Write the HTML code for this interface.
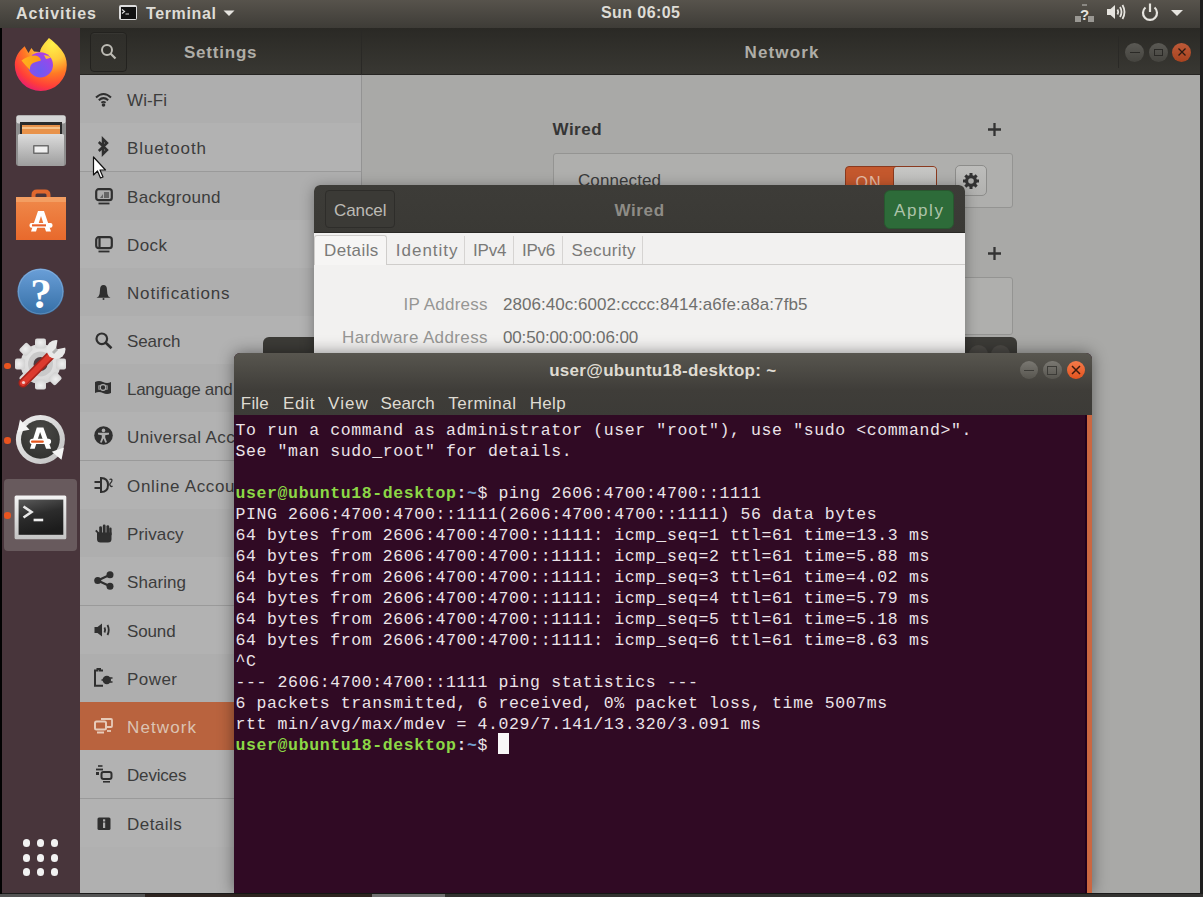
<!DOCTYPE html><html><head><meta charset="utf-8"><style>
*{margin:0;padding:0;box-sizing:border-box}
html,body{width:1203px;height:897px;overflow:hidden;background:#1b1b1b;font-family:"Liberation Sans",sans-serif}
.a{position:absolute}
.t{white-space:pre}
svg{position:absolute;overflow:visible}
</style></head><body>
<div class="a" style="left:0;top:0;width:1203px;height:28px;background:linear-gradient(#57534c,#3e3c37)"></div>
<div class="a t" style="left:16.00px;top:4.70px;font-size:16px;line-height:17px;font-weight:bold;color:#dedcd6;letter-spacing:0.977px;">Activities</div>
<div class="a" style="left:119px;top:5px;width:18px;height:15px;background:#ddd;border-radius:2px"></div>
<div class="a" style="left:120.5px;top:6.5px;width:15px;height:12px;background:#111"></div>
<svg style="left:121px;top:8px" width="10" height="8"><path d="M1 1.5 L3.5 3.5 L1 5.5" stroke="#ddd" stroke-width="1.2" fill="none"/><path d="M4.5 6 H8" stroke="#ddd" stroke-width="1"/></svg>
<div class="a t" style="left:146.00px;top:4.70px;font-size:16px;line-height:17px;font-weight:bold;color:#dedcd6;letter-spacing:0.634px;">Terminal</div>
<svg style="left:223px;top:10px" width="12" height="6"><path d="M0.5 0.5 H11.5 L6 6 Z" fill="#e6e4df"/></svg>
<div class="a t" style="left:601.00px;top:4.10px;font-size:16px;line-height:17px;font-weight:bold;color:#dedcd6;letter-spacing:0.420px;">Sun 06:05</div>
<svg style="left:1074px;top:3px" width="22" height="20">
<rect x="1" y="13" width="6" height="6" fill="#9a9893"/><rect x="14" y="13" width="6" height="6" fill="#9a9893"/>
<rect x="8" y="1" width="5" height="2" fill="#8a8883"/>
<text x="10.5" y="17" font-family="Liberation Sans" font-weight="bold" font-size="15" fill="#e6e4df" text-anchor="middle">?</text></svg>
<svg style="left:1106px;top:3px" width="20" height="18">
<path d="M1 6 H4.5 L9 2 V16 L4.5 12 H1 Z" fill="#e6e4df"/>
<path d="M11.5 6.5 Q13 9 11.5 11.5" stroke="#e6e4df" stroke-width="1.8" fill="none"/>
<path d="M14 4 Q17 9 14 14" stroke="#e6e4df" stroke-width="1.8" fill="none"/>
<path d="M16.5 2 Q20.5 9 16.5 16" stroke="#e6e4df" stroke-width="1.8" fill="none"/></svg>
<svg style="left:1140px;top:2px" width="20" height="20">
<path d="M5.5 5.5 A7 7 0 1 0 14.5 5.5" stroke="#e6e4df" stroke-width="2.2" fill="none"/>
<path d="M10 1.5 V10" stroke="#e6e4df" stroke-width="2.2"/></svg>
<svg style="left:1171px;top:10px" width="12" height="6"><path d="M0 0 H12 L6 6 Z" fill="#e6e4df"/></svg>
<div class="a" style="left:0;top:28px;width:80px;height:865px;background:#48353b"></div>
<div class="a" style="left:0;top:28px;width:2px;height:869px;background:#020202"></div>
<svg style="left:10px;top:32px" width="60" height="64" viewBox="0 0 60 64">
<defs>
<radialGradient id="ffg" cx="0.72" cy="0.12" r="1.0">
<stop offset="0" stop-color="#fff14a"/><stop offset="0.3" stop-color="#ffc93a"/><stop offset="0.55" stop-color="#ff7a24"/><stop offset="0.8" stop-color="#ff3d3a"/><stop offset="1" stop-color="#e0157f"/></radialGradient>
<radialGradient id="ffp" cx="0.45" cy="0.75" r="0.8"><stop offset="0" stop-color="#6a5cf2"/><stop offset="0.6" stop-color="#8e4cec"/><stop offset="1" stop-color="#b73be0"/></radialGradient>
<linearGradient id="ffh" x1="0" y1="0" x2="1" y2="0"><stop offset="0" stop-color="#ffb21e"/><stop offset="1" stop-color="#ff9a16"/></linearGradient>
</defs>
<path d="M14.6 14.3 C8 20 4.8 26 4.8 33 A26 26 0 0 0 56.8 33 C56.8 22 50 16 46 12 C43 9 40.5 7 38.9 6 C36 10 31 14 30 20 L24 19.5 L21.4 16 L18.5 21 Z" fill="url(#ffg)"/>
<circle cx="30.4" cy="32.8" r="12.6" fill="url(#ffp)"/>
<path d="M11.5 28.5 Q17 24 25 23.5 Q30 24 31 28.5 Q26 29.5 23 31 Q19.5 33 20 38 Q15 33 11.5 28.5 Z" fill="url(#ffh)"/>
<path d="M34 23 Q38 23 41 25.5 Q38 26.5 36 27 Z" fill="#ffb83a"/>
</svg>
<svg style="left:15px;top:113px" width="52" height="56" viewBox="0 0 52 56">
<defs><linearGradient id="fcab" x1="0" y1="0" x2="0" y2="1"><stop offset="0" stop-color="#dcdcdc"/><stop offset="1" stop-color="#9d9d9d"/></linearGradient></defs>
<rect x="1" y="2" width="50" height="51" rx="3" fill="#8e8e8e"/>
<rect x="1.5" y="2.5" width="49" height="8" rx="2" fill="#d6d6d6"/>
<rect x="5" y="9" width="42" height="14" fill="#2b2b2b"/>
<rect x="7" y="12" width="38" height="9" fill="#e8924a"/>
<rect x="7" y="14" width="38" height="2" fill="#f6c28a"/>
<rect x="3" y="21" width="46" height="32" rx="1.5" fill="url(#fcab)"/>
<rect x="18" y="32" width="16" height="9" rx="1" fill="#6d6d6d"/>
<rect x="19.5" y="33.5" width="13" height="6" fill="#f0f0f0"/>
</svg>
<svg style="left:15px;top:188px" width="52" height="55" viewBox="0 0 52 55">
<defs><linearGradient id="swg" x1="0" y1="0" x2="0" y2="1"><stop offset="0" stop-color="#f08a4b"/><stop offset="1" stop-color="#e8692c"/></linearGradient></defs>
<path d="M18.5 15 V7 Q18.5 3.5 22 3.5 H30 Q33.5 3.5 33.5 7 V15" stroke="#e0682e" stroke-width="4" fill="none"/>
<rect x="1" y="9" width="50" height="43" fill="url(#swg)"/>
<rect x="1" y="9" width="50" height="5" fill="#f39e62"/>
<path d="M16 43.6 L23 23 H29 L36 43.6 H31 L26 28 L21 43.6 Z" fill="#fff"/>
<rect x="14.5" y="35" width="23" height="4.7" rx="2" fill="#fff"/>
<rect x="17" y="36.3" width="14" height="2.1" fill="#e8602a"/>
</svg>
<svg style="left:16px;top:267px" width="50" height="50" viewBox="0 0 50 50">
<defs><linearGradient id="hg" x1="0" y1="0" x2="0" y2="1"><stop offset="0" stop-color="#6a9fd8"/><stop offset="1" stop-color="#356fa6"/></linearGradient></defs>
<circle cx="24.6" cy="24.6" r="23.2" fill="url(#hg)"/>
<circle cx="24.6" cy="24.6" r="22.2" fill="none" stroke="rgba(255,255,255,0.18)" stroke-width="1"/>
<text x="25" y="41" font-family="Liberation Serif" font-weight="bold" font-size="43" fill="#fff" text-anchor="middle">?</text>
</svg>
<svg style="left:14px;top:337px" width="54" height="55" viewBox="0 0 54 55">
<defs><radialGradient id="gg" cx="0.5" cy="0.4" r="0.6"><stop offset="0" stop-color="#f0f0f0"/><stop offset="1" stop-color="#d4d4d4"/></radialGradient></defs>
<g fill="url(#gg)">
<circle cx="26.5" cy="27" r="20"/>
<rect x="21" y="1.5" width="11" height="10" rx="2" transform="rotate(0 26.5 27)"/><rect x="21" y="1.5" width="11" height="10" rx="2" transform="rotate(45 26.5 27)"/><rect x="21" y="1.5" width="11" height="10" rx="2" transform="rotate(90 26.5 27)"/><rect x="21" y="1.5" width="11" height="10" rx="2" transform="rotate(135 26.5 27)"/><rect x="21" y="1.5" width="11" height="10" rx="2" transform="rotate(180 26.5 27)"/><rect x="21" y="1.5" width="11" height="10" rx="2" transform="rotate(225 26.5 27)"/><rect x="21" y="1.5" width="11" height="10" rx="2" transform="rotate(270 26.5 27)"/><rect x="21" y="1.5" width="11" height="10" rx="2" transform="rotate(315 26.5 27)"/>
</g>
<circle cx="26.5" cy="27" r="12.5" fill="#c9c9c9"/>
<circle cx="26.5" cy="27" r="7" fill="#4d3d41"/>
<path d="M9 46 L40 15" stroke="#a8231b" stroke-width="9" stroke-linecap="round"/>
<path d="M9 46 L40 15" stroke="#dc3a2e" stroke-width="6" stroke-linecap="round"/>
<circle cx="9.5" cy="45.5" r="1.6" fill="#f4d0cc"/>
<circle cx="42" cy="12.5" r="9.5" fill="#e8e8e8"/>
<path d="M42 12.5 L44 0 L54 10 Z" fill="#48353b"/>
<path d="M39 16 L43 12" stroke="#b0b0b0" stroke-width="3"/>
</svg>
<div class="a" style="left:4.2px;top:362.5px;width:6.6px;height:6.6px;border-radius:50%;background:#e9541f"></div>
<svg style="left:15px;top:414px" width="51" height="51" viewBox="0 0 51 51">
<defs><linearGradient id="ug" x1="0" y1="0" x2="1" y2="1"><stop offset="0" stop-color="#f2f2f2"/><stop offset="1" stop-color="#bdbdbd"/></linearGradient>
<radialGradient id="ud" cx="0.5" cy="0.3" r="0.7"><stop offset="0" stop-color="#4a4a47"/><stop offset="1" stop-color="#333331"/></radialGradient></defs>
<circle cx="25.4" cy="25.4" r="24.5" fill="url(#ug)"/>
<circle cx="25.4" cy="25.4" r="19.4" fill="url(#ud)"/>
<path d="M5 5.4 L2.4 18 L14.5 15.8 Z" fill="#f4f4f4"/>
<path d="M49 33.5 L36.8 37.8 L46.5 45.8 Z" fill="#f4f4f4"/>
<path d="M15 34.8 L21.8 13.4 H28.4 L36.1 34.8 H31.1 L25.1 18 L19.7 34.8 Z" fill="#fff"/>
<rect x="14.7" y="24.8" width="21.4" height="5.3" rx="2.6" fill="#fff"/>
<rect x="16" y="26.4" width="12.8" height="2.4" rx="1" fill="#e5561c"/>
</svg>
<div class="a" style="left:4.2px;top:437px;width:6.6px;height:6.6px;border-radius:50%;background:#e9541f"></div>
<div class="a" style="left:4px;top:479px;width:73px;height:72px;border-radius:4px;background:#685a5d"></div>
<svg style="left:13px;top:494px" width="55" height="47" viewBox="0 0 55 47">
<defs><linearGradient id="tsg" x1="0" y1="0" x2="0.3" y2="1"><stop offset="0" stop-color="#5a5a5a"/><stop offset="0.5" stop-color="#2c2c2c"/><stop offset="1" stop-color="#1c1c1c"/></linearGradient>
<linearGradient id="tfg" x1="0" y1="0" x2="0" y2="1"><stop offset="0" stop-color="#f4f4f4"/><stop offset="1" stop-color="#c4c4c4"/></linearGradient></defs>
<rect x="1.6" y="1.6" width="51.7" height="43.7" rx="1.5" fill="url(#tfg)"/>
<rect x="5.6" y="5.6" width="44.7" height="35.2" fill="url(#tsg)"/>
<path d="M10.5 12.5 L18.5 18 L10.5 23.5" stroke="#e8e8e8" stroke-width="2.6" fill="none"/>
<rect x="20.6" y="24.7" width="9.6" height="2.6" fill="#eee"/>
</svg>
<div class="a" style="left:4.2px;top:512px;width:6.6px;height:6.6px;border-radius:50%;background:#e9541f"></div>
<div class="a" style="left:22.9px;top:839.4px;width:7.2px;height:7.2px;border-radius:50%;background:#f2f2f2"></div>
<div class="a" style="left:37.0px;top:839.4px;width:7.2px;height:7.2px;border-radius:50%;background:#f2f2f2"></div>
<div class="a" style="left:51.2px;top:839.4px;width:7.2px;height:7.2px;border-radius:50%;background:#f2f2f2"></div>
<div class="a" style="left:22.9px;top:854.4px;width:7.2px;height:7.2px;border-radius:50%;background:#f2f2f2"></div>
<div class="a" style="left:37.0px;top:854.4px;width:7.2px;height:7.2px;border-radius:50%;background:#f2f2f2"></div>
<div class="a" style="left:51.2px;top:854.4px;width:7.2px;height:7.2px;border-radius:50%;background:#f2f2f2"></div>
<div class="a" style="left:22.9px;top:868.4px;width:7.2px;height:7.2px;border-radius:50%;background:#f2f2f2"></div>
<div class="a" style="left:37.0px;top:868.4px;width:7.2px;height:7.2px;border-radius:50%;background:#f2f2f2"></div>
<div class="a" style="left:51.2px;top:868.4px;width:7.2px;height:7.2px;border-radius:50%;background:#f2f2f2"></div>
<div class="a" style="left:80px;top:28px;width:1120px;height:47px;background:linear-gradient(#2a2925,#393833)"></div>
<div class="a" style="left:80px;top:74px;width:1120px;height:1px;background:#262522"></div>
<div class="a" style="left:361px;top:28px;width:1px;height:47px;background:#2a2926"></div>
<div class="a" style="left:90px;top:32px;width:37px;height:40px;border-radius:4px;border:1px solid #23221f;background:linear-gradient(#2f2e2a,#34332e);box-shadow:inset 0 1px 0 rgba(255,255,255,0.04)"></div>
<svg style="left:100px;top:43px" width="18" height="18"><circle cx="7" cy="7" r="5" stroke="#bdbbb4" stroke-width="2" fill="none"/><path d="M10.5 10.5 L15.5 15.5" stroke="#bdbbb4" stroke-width="2.2"/></svg>
<div class="a t" style="left:184.00px;top:43.00px;font-size:17px;line-height:19px;font-weight:bold;color:#afada7;letter-spacing:0.777px;">Settings</div>
<div class="a t" style="left:744.50px;top:43.00px;font-size:17px;line-height:19px;font-weight:bold;color:#afada7;letter-spacing:1.156px;">Network</div>
<div class="a" style="left:1118px;top:36px;width:1px;height:32px;background:#2a2926"></div>
<div class="a" style="left:1125.0px;top:42.5px;width:19.0px;height:19.0px;border-radius:50%;background:linear-gradient(#5a5954,#45443f)"></div><div class="a" style="left:1129.5px;top:51.5px;width:10px;height:1.5px;background:#2a2926"></div>
<div class="a" style="left:1148.5px;top:42.5px;width:19.0px;height:19.0px;border-radius:50%;background:linear-gradient(#5a5954,#45443f)"></div><div class="a" style="left:1153.5px;top:48.5px;width:9px;height:7px;border:1.4px solid #2a2926"></div>
<div class="a" style="left:1172.0px;top:42.5px;width:19.0px;height:19.0px;border-radius:50%;background:linear-gradient(#bd5a38,#a9431f)"></div><svg style="left:1177.5px;top:48px" width="8" height="8"><path d="M0.5 0.5 L7.5 7.5 M7.5 0.5 L0.5 7.5" stroke="#2a1a12" stroke-width="1.3"/></svg>
<div class="a" style="left:80px;top:75px;width:281px;height:818px;background:#b0b0b0"></div>
<div class="a" style="left:362px;top:75px;width:838px;height:818px;background:#a9a9a7"></div>
<div class="a" style="left:361px;top:75px;width:1px;height:818px;background:#939393"></div>
<div class="a" style="left:80px;top:75px;width:281px;height:48px;background:#aeaeae"></div>
<div class="a" style="left:80px;top:172px;width:281px;height:48px;background:#aeaeae"></div>
<div class="a" style="left:80px;top:268px;width:281px;height:48px;background:#aeaeae"></div>
<div class="a" style="left:80px;top:364px;width:281px;height:48px;background:#aeaeae"></div>
<div class="a" style="left:80px;top:509px;width:281px;height:48px;background:#aeaeae"></div>
<div class="a" style="left:80px;top:654px;width:281px;height:48px;background:#aeaeae"></div>
<div class="a" style="left:80px;top:123px;width:281px;height:48px;background:#b2b2b2"></div>
<div class="a" style="left:80px;top:220px;width:281px;height:48px;background:#b2b2b2"></div>
<div class="a" style="left:80px;top:316px;width:281px;height:48px;background:#b2b2b2"></div>
<div class="a" style="left:80px;top:412px;width:281px;height:48px;background:#b2b2b2"></div>
<div class="a" style="left:80px;top:461px;width:281px;height:48px;background:#b2b2b2"></div>
<div class="a" style="left:80px;top:557px;width:281px;height:48px;background:#b2b2b2"></div>
<div class="a" style="left:80px;top:606px;width:281px;height:48px;background:#b2b2b2"></div>
<div class="a" style="left:80px;top:750px;width:281px;height:48px;background:#b2b2b2"></div>
<div class="a" style="left:80px;top:799px;width:281px;height:48px;background:#b2b2b2"></div>
<div class="a" style="left:80px;top:171px;width:281px;height:1px;background:#9a9a9a"></div>
<div class="a" style="left:80px;top:460px;width:281px;height:1px;background:#9a9a9a"></div>
<div class="a" style="left:80px;top:605px;width:281px;height:1px;background:#9a9a9a"></div>
<div class="a" style="left:80px;top:798px;width:281px;height:1px;background:#9a9a9a"></div>
<div class="a" style="left:80px;top:702px;width:281px;height:48px;background:#b9633e"></div>
<div class="a t" style="left:127.00px;top:90.50px;font-size:17px;line-height:19px;font-weight:normal;color:#3c3c3c;letter-spacing:0.086px;">Wi-Fi</div>
<div class="a t" style="left:127.00px;top:138.50px;font-size:17px;line-height:19px;font-weight:normal;color:#3c3c3c;letter-spacing:0.896px;">Bluetooth</div>
<div class="a t" style="left:127.00px;top:187.50px;font-size:17px;line-height:19px;font-weight:normal;color:#3c3c3c;letter-spacing:0.309px;">Background</div>
<div class="a t" style="left:127.00px;top:235.50px;font-size:17px;line-height:19px;font-weight:normal;color:#3c3c3c;letter-spacing:0.422px;">Dock</div>
<div class="a t" style="left:127.00px;top:283.50px;font-size:17px;line-height:19px;font-weight:normal;color:#3c3c3c;letter-spacing:0.834px;">Notifications</div>
<div class="a t" style="left:127.00px;top:331.50px;font-size:17px;line-height:19px;font-weight:normal;color:#3c3c3c;letter-spacing:-0.092px;">Search</div>
<div class="a t" style="left:127.00px;top:379.50px;font-size:17px;line-height:19px;font-weight:normal;color:#3c3c3c;letter-spacing:-0.282px;">Language and Region</div>
<div class="a t" style="left:127.00px;top:427.50px;font-size:17px;line-height:19px;font-weight:normal;color:#3c3c3c;letter-spacing:0.393px;">Universal Access</div>
<div class="a t" style="left:127.00px;top:476.50px;font-size:17px;line-height:19px;font-weight:normal;color:#3c3c3c;letter-spacing:0.672px;">Online Accounts</div>
<div class="a t" style="left:127.00px;top:524.50px;font-size:17px;line-height:19px;font-weight:normal;color:#3c3c3c;letter-spacing:0.144px;">Privacy</div>
<div class="a t" style="left:127.00px;top:572.50px;font-size:17px;line-height:19px;font-weight:normal;color:#3c3c3c;letter-spacing:0.068px;">Sharing</div>
<div class="a t" style="left:127.00px;top:621.50px;font-size:17px;line-height:19px;font-weight:normal;color:#3c3c3c;letter-spacing:-0.139px;">Sound</div>
<div class="a t" style="left:127.00px;top:669.50px;font-size:17px;line-height:19px;font-weight:normal;color:#3c3c3c;letter-spacing:0.453px;">Power</div>
<div class="a t" style="left:127.00px;top:717.50px;font-size:17px;line-height:19px;font-weight:normal;color:#dcc3b3;letter-spacing:1.109px;">Network</div>
<div class="a t" style="left:127.00px;top:765.50px;font-size:17px;line-height:19px;font-weight:normal;color:#3c3c3c;letter-spacing:-0.178px;">Devices</div>
<div class="a t" style="left:127.00px;top:814.50px;font-size:17px;line-height:19px;font-weight:normal;color:#3c3c3c;letter-spacing:0.472px;">Details</div>
<svg style="left:95px;top:92px" width="17" height="15" viewBox="0 0 17 15" fill="#2f2f2f" stroke="#2f2f2f"><path d="M1 5.5 Q8.5 -1.5 16 5.5" fill="none" stroke-width="2"/><path d="M3.8 8.3 Q8.5 4 13.2 8.3" fill="none" stroke-width="2"/><path d="M6.4 10.8 Q8.5 9 10.6 10.8" fill="none" stroke-width="1.8"/><circle cx="8.5" cy="13" r="1.8" stroke="none"/></svg>
<svg style="left:97px;top:137px" width="12" height="19" viewBox="0 0 12 19" fill="#2f2f2f" stroke="#2f2f2f"><path d="M1.8 5 L10 13 L6 17 V2 L10 6 L1.8 14" fill="none" stroke-width="2.5" stroke-linejoin="miter"/></svg>
<svg style="left:95px;top:188px" width="18" height="17" viewBox="0 0 18 17" fill="#2f2f2f" stroke="#2f2f2f"><rect x="1.2" y="1.2" width="15.6" height="11" rx="2.5" fill="none" stroke-width="2.2"/><path d="M5 10 L8 6 V10 Z M9 4 H14 V10 H9 Z" stroke="none" fill="#666"/><path d="M3.5 15.5 H14.5" stroke-width="1.8"/></svg>
<svg style="left:95px;top:236px" width="18" height="17" viewBox="0 0 18 17" fill="#2f2f2f" stroke="#2f2f2f"><rect x="1.2" y="1.2" width="15.6" height="11" rx="2.5" fill="none" stroke-width="2.2"/><path d="M4.5 2 V12" stroke-width="2.2"/><path d="M3.5 15.5 H14.5" stroke-width="1.8"/></svg>
<svg style="left:96px;top:284px" width="15" height="16" viewBox="0 0 15 16" fill="#2f2f2f" stroke="#2f2f2f"><path d="M2.5 12.5 Q4 10 4 6 Q4 1 7.5 1 Q11 1 11 6 Q11 10 12.5 12.5 L14.5 13.8 H0.5 Z" stroke="none"/><circle cx="7.5" cy="15" r="1" stroke="none"/></svg>
<svg style="left:95px;top:332px" width="18" height="17" viewBox="0 0 18 17" fill="#2f2f2f" stroke="#2f2f2f"><circle cx="6.8" cy="6.8" r="5.3" fill="none" stroke-width="2.2"/><path d="M10.5 10.5 L16.5 16.2" stroke-width="2.6"/></svg>
<svg style="left:94px;top:380px" width="18" height="15" viewBox="0 0 18 15" fill="#2f2f2f" stroke="#2f2f2f"><path d="M1 2 Q5 0 9 2 Q13 4 17 2 V13 Q13 15 9 13 Q5 11 1 13 Z" stroke="none"/><circle cx="9" cy="7.5" r="2.8" fill="none" stroke="#aeaeae" stroke-width="1.2"/><path d="M5.2 5 Q4.2 7.5 5.2 10 M12.8 5 Q13.8 7.5 12.8 10" fill="none" stroke="#aeaeae" stroke-width="1"/></svg>
<svg style="left:94px;top:426px" width="19" height="19" viewBox="0 0 19 19" fill="#2f2f2f" stroke="#2f2f2f"><circle cx="9.5" cy="9.5" r="9.3" stroke="none"/><g fill="#aeaeae" stroke="none"><circle cx="9.5" cy="4.4" r="1.8"/><path d="M4 6.8 L15 6.8 L15 8.5 L11.2 9.2 L11.2 11.5 L13 16.2 L11.3 16.8 L9.5 12.5 L7.7 16.8 L6 16.2 L7.8 11.5 L7.8 9.2 L4 8.5 Z"/></g></svg>
<svg style="left:94px;top:477px" width="19" height="16" viewBox="0 0 19 16" fill="#2f2f2f" stroke="#2f2f2f"><path d="M7 1 Q14 1 14 8 Q14 15 7 15 Z" fill="none" stroke-width="2"/><path d="M0.5 5 H6 M0.5 11 H6" stroke-width="2"/><path d="M15.5 2.5 Q17.5 1.5 18 3 Q18 5 16.5 6 Q15 7.5 16.5 9 Q17.5 10 18.5 9" fill="none" stroke-width="1.2"/></svg>
<svg style="left:95px;top:524px" width="18" height="19" viewBox="0 0 18 19" fill="#2f2f2f" stroke="#2f2f2f"><path d="M2 8.5 H16.5 V15 Q16.5 18.5 13 18.5 H5.5 Q2 18.5 2 15 Z" stroke="none"/><rect x="4.2" y="2.2" width="2.8" height="9" rx="1.4" stroke="none"/><rect x="7.8" y="0.6" width="2.8" height="10" rx="1.4" stroke="none"/><rect x="11.4" y="1.2" width="2.8" height="10" rx="1.4" stroke="none"/><rect x="14.2" y="3.5" width="2.4" height="8" rx="1.2" stroke="none"/><path d="M2 9 L0.6 7.5 Q0.2 6.2 1.4 5.8 L4.5 9 Z" stroke="none"/></svg>
<svg style="left:94px;top:571px" width="20" height="19" viewBox="0 0 20 19" fill="#2f2f2f" stroke="#2f2f2f"><circle cx="3.7" cy="9.5" r="3.5" stroke="none"/><circle cx="16" cy="3.7" r="3.5" stroke="none"/><circle cx="16" cy="15.3" r="3.5" stroke="none"/><path d="M3.7 9.5 L16 3.7 M3.7 9.5 L16 15.3" stroke-width="2.2"/></svg>
<svg style="left:94px;top:623px" width="17" height="14" viewBox="0 0 17 14" fill="#2f2f2f" stroke="#2f2f2f"><path d="M0.5 4 H3.5 L8 0.5 V13.5 L3.5 10 H0.5 Z" stroke="none"/><path d="M10.5 4.5 Q11.8 7 10.5 9.5" fill="none" stroke-width="1.8"/><path d="M13.5 2 Q16 7 13.5 12" fill="none" stroke-width="1.8"/></svg>
<svg style="left:94px;top:668px" width="19" height="19" viewBox="0 0 19 19" fill="#2f2f2f" stroke="#2f2f2f"><path d="M9 2.5 H6 V1 H3.5 V2.5 H1 V17.8 H9" fill="none" stroke-width="2"/><circle cx="12.8" cy="12" r="4.2" stroke="none"/><path d="M16 10 H18.5 M16 14 H18.5 M10 12 H7.5" stroke-width="1.6"/></svg>
<svg style="left:94px;top:718px" width="19" height="16" viewBox="0 0 19 16" fill="#e7cbb9" stroke="#e7cbb9"><rect x="1" y="3.5" width="11" height="8" rx="1.5" fill="none" stroke-width="2"/><path d="M3 14.5 H10" stroke-width="2"/><path d="M7 1 H17 Q18 1 18 2 V8 Q18 9 17 9 H13" fill="none" stroke-width="1.8"/><path d="M13 13 H17" stroke-width="1.8"/></svg>
<svg style="left:95px;top:765px" width="18" height="18" viewBox="0 0 18 18" fill="#2f2f2f" stroke="#2f2f2f"><path d="M3 1 H7.5" stroke-width="1.6"/><path d="M1 4.5 H8" stroke-width="1.8"/><rect x="1" y="7" width="3" height="3" stroke="none"/><rect x="6.5" y="7" width="10" height="7" rx="2" fill="none" stroke-width="2"/><path d="M8 16.8 H15" stroke-width="1.6"/></svg>
<svg style="left:97px;top:817px" width="14" height="13" viewBox="0 0 14 13" fill="#2f2f2f" stroke="#2f2f2f"><rect x="0.5" y="0.5" width="13" height="12.5" rx="1.5" stroke="none"/><rect x="6" y="2.3" width="2.2" height="2.2" fill="#aeaeae" stroke="none"/><rect x="6" y="5.5" width="2.2" height="5.5" fill="#aeaeae" stroke="none"/></svg>
<div class="a t" style="left:552.50px;top:120.00px;font-size:17px;line-height:19px;font-weight:bold;color:#353535;letter-spacing:0.484px;">Wired</div>
<svg style="left:987px;top:122px" width="15" height="15"><path d="M7.5 1 V14 M1 7.5 H14" stroke="#333" stroke-width="2.3"/></svg>
<div class="a" style="left:553px;top:153px;width:460px;height:55px;background:#afafad;border:1px solid #949492;border-radius:3px"></div>
<div class="a t" style="left:578.00px;top:171.00px;font-size:17px;line-height:19px;font-weight:normal;color:#3a3a3a;letter-spacing:0.098px;">Connected</div>
<div class="a" style="left:845px;top:166px;width:92px;height:30px;border-radius:4px;background:#c4582d;border:1px solid #8a3a1f"></div>
<div class="a" style="left:893px;top:167px;width:43px;height:28px;border-radius:3px;background:linear-gradient(#c6c6c4,#b9b9b7);border-left:1px solid #8a3a1f"></div>
<div class="a t" style="left:855.50px;top:173.50px;font-size:16px;line-height:17px;font-weight:normal;color:#e6bca6;letter-spacing:0.984px;">ON</div>
<div class="a" style="left:955px;top:165px;width:32px;height:31px;border-radius:5px;background:linear-gradient(#bdbdbb,#b1b1af);border:1px solid #8c8c8a"></div>
<svg style="left:962px;top:172px" width="18" height="18" viewBox="0 0 18 18"><g fill="#333"><rect x="7.5" y="1" width="3" height="4" transform="rotate(0 9 9)"/><rect x="7.5" y="1" width="3" height="4" transform="rotate(45 9 9)"/><rect x="7.5" y="1" width="3" height="4" transform="rotate(90 9 9)"/><rect x="7.5" y="1" width="3" height="4" transform="rotate(135 9 9)"/><rect x="7.5" y="1" width="3" height="4" transform="rotate(180 9 9)"/><rect x="7.5" y="1" width="3" height="4" transform="rotate(225 9 9)"/><rect x="7.5" y="1" width="3" height="4" transform="rotate(270 9 9)"/><rect x="7.5" y="1" width="3" height="4" transform="rotate(315 9 9)"/><circle cx="9" cy="9" r="6"/></g><circle cx="9" cy="9" r="2.8" fill="#adadab"/></svg>
<svg style="left:987px;top:246px" width="15" height="15"><path d="M7.5 1 V14 M1 7.5 H14" stroke="#333" stroke-width="2.3"/></svg>
<div class="a" style="left:553px;top:277px;width:460px;height:58px;background:#afafad;border:1px solid #949492;border-radius:3px"></div>
<div class="a" style="left:263px;top:337px;width:754px;height:30px;border-radius:6px 6px 0 0;background:#3c3b37"></div>
<div class="a" style="left:969px;top:345px;width:19px;height:19px;border-radius:50%;background:#4b4945"></div>
<div class="a" style="left:991px;top:345px;width:19px;height:19px;border-radius:50%;background:#4b4945"></div>
<div class="a" style="left:314px;top:185px;width:651px;height:168px;border-radius:6px 6px 0 0;background:#f2f1f0;box-shadow:0 2px 14px rgba(0,0,0,0.35)"></div>
<div class="a" style="left:314px;top:185px;width:651px;height:48px;border-radius:6px 6px 0 0;background:linear-gradient(#3d3c38,#3a3935)"></div>
<div class="a" style="left:325px;top:190px;width:70px;height:38px;border-radius:4px;border:1px solid #2e2d2a;background:#3b3a36"></div>
<div class="a t" style="left:334.00px;top:201.00px;font-size:17px;line-height:19px;font-weight:normal;color:#bdbbb5;letter-spacing:-0.084px;">Cancel</div>
<div class="a t" style="left:614.50px;top:200.80px;font-size:17px;line-height:19px;font-weight:bold;color:#8e8c86;letter-spacing:0.609px;">Wired</div>
<div class="a" style="left:314px;top:232px;width:651px;height:1px;background:#2b2a27"></div>
<div class="a" style="left:884px;top:190px;width:70px;height:39px;border-radius:6px;background:#2d6b39;border:1px solid #28572f"></div>
<div class="a t" style="left:894.00px;top:200.80px;font-size:17px;line-height:19px;font-weight:normal;color:#adc3aa;letter-spacing:1.617px;">Apply</div>
<div class="a" style="left:314px;top:264px;width:651px;height:1px;background:#cfcdcb"></div>
<div class="a" style="left:314px;top:235px;width:73px;height:30px;background:#f6f5f4;border:1px solid #cfcdcb;border-bottom:none;border-radius:3px 3px 0 0"></div>
<div class="a t" style="left:324.00px;top:241.30px;font-size:17px;line-height:19px;font-weight:normal;color:#7a7a78;letter-spacing:0.389px;">Details</div>
<div class="a" style="left:463.5px;top:236px;width:1px;height:28px;background:#d6d4d2"></div>
<div class="a t" style="left:395.80px;top:241.30px;font-size:17px;line-height:19px;font-weight:normal;color:#7a7a78;letter-spacing:0.986px;">Identity</div>
<div class="a" style="left:512.6px;top:236px;width:1px;height:28px;background:#d6d4d2"></div>
<div class="a t" style="left:473.00px;top:241.30px;font-size:17px;line-height:19px;font-weight:normal;color:#7a7a78;letter-spacing:-0.172px;">IPv4</div>
<div class="a" style="left:562.0px;top:236px;width:1px;height:28px;background:#d6d4d2"></div>
<div class="a t" style="left:522.00px;top:241.30px;font-size:17px;line-height:19px;font-weight:normal;color:#7a7a78;letter-spacing:-0.239px;">IPv6</div>
<div class="a" style="left:641.5px;top:236px;width:1px;height:28px;background:#d6d4d2"></div>
<div class="a t" style="left:571.50px;top:241.30px;font-size:17px;line-height:19px;font-weight:normal;color:#7a7a78;letter-spacing:0.371px;">Security</div>
<div class="a t" style="left:403.50px;top:294.60px;font-size:17px;line-height:19px;font-weight:normal;color:#969694;letter-spacing:0.234px;">IP Address</div>
<div class="a t" style="left:342.00px;top:328.00px;font-size:17px;line-height:19px;font-weight:normal;color:#969694;letter-spacing:0.378px;">Hardware Address</div>
<div class="a t" style="left:502.90px;top:294.60px;font-size:17px;line-height:19px;font-weight:normal;color:#6f6f6d;letter-spacing:0.056px;">2806:40c:6002:cccc:8414:a6fe:a8a:7fb5</div>
<div class="a t" style="left:502.90px;top:328.00px;font-size:17px;line-height:19px;font-weight:normal;color:#6f6f6d;letter-spacing:-0.108px;">00:50:00:00:06:00</div>
<div class="a" style="left:234px;top:353px;width:858px;height:540px;border-radius:6px 6px 0 0;background:#300a24;box-shadow:0 0 16px rgba(0,0,0,0.45)"></div>
<div class="a" style="left:234px;top:353px;width:858px;height:62px;border-radius:6px 6px 0 0;background:linear-gradient(#58564f 0%,#3f3d39 60%,#3c3b37 100%)"></div>
<div class="a t" style="left:549.20px;top:361.30px;font-size:17px;line-height:19px;font-weight:bold;color:#dfdbd2;letter-spacing:0.298px;">user@ubuntu18-desktop: ~</div>
<div class="a" style="left:1019.7px;top:360.7px;width:18.6px;height:18.6px;border-radius:50%;background:linear-gradient(#7a7872,#57554f)"></div><div class="a" style="left:1024px;top:369.5px;width:10px;height:1.5px;background:#3c3b37"></div>
<div class="a" style="left:1043.1000000000001px;top:360.7px;width:18.6px;height:18.6px;border-radius:50%;background:linear-gradient(#7a7872,#57554f)"></div><div class="a" style="left:1047.4px;top:365.5px;width:10px;height:9px;border:1.5px solid #3c3b37"></div>
<div class="a" style="left:1066.5px;top:360.7px;width:18.6px;height:18.6px;border-radius:50%;background:linear-gradient(#f57a4a,#e2541f)"></div><svg style="left:1070.8px;top:365px" width="10" height="10"><path d="M1 1 L9 9 M9 1 L1 9" stroke="#3a1a0e" stroke-width="1.5"/></svg>
<div class="a t" style="left:240.80px;top:394.00px;font-size:17px;line-height:19px;font-weight:normal;color:#dfdbd2;letter-spacing:0.198px;">File</div>
<div class="a t" style="left:283.00px;top:394.00px;font-size:17px;line-height:19px;font-weight:normal;color:#dfdbd2;letter-spacing:0.734px;">Edit</div>
<div class="a t" style="left:328.10px;top:394.00px;font-size:17px;line-height:19px;font-weight:normal;color:#dfdbd2;letter-spacing:1.051px;">View</div>
<div class="a t" style="left:380.50px;top:394.00px;font-size:17px;line-height:19px;font-weight:normal;color:#dfdbd2;letter-spacing:0.068px;">Search</div>
<div class="a t" style="left:448.20px;top:394.00px;font-size:17px;line-height:19px;font-weight:normal;color:#dfdbd2;letter-spacing:0.524px;">Terminal</div>
<div class="a t" style="left:529.70px;top:394.00px;font-size:17px;line-height:19px;font-weight:normal;color:#dfdbd2;letter-spacing:0.310px;">Help</div>
<div class="a" style="left:1085px;top:415px;width:1.5px;height:478px;background:#22001a"></div>
<div class="a" style="left:1086.5px;top:415px;width:5.5px;height:478px;background:#cb6741"></div>
<div class="a t" style="left:235.5px;top:420.4px;font-family:'Liberation Mono',monospace;font-size:16.5px;letter-spacing:0.62px;line-height:21px;color:#ebe3e8">To run a command as administrator (user "root"), use "sudo &lt;command&gt;".
See "man sudo_root" for details.

<span style="color:#8cd846;font-weight:bold">user@ubuntu18-desktop</span><span style="font-weight:bold">:</span><span style="color:#729fcf;font-weight:bold">~</span>$ ping 2606:4700:4700::1111
PING 2606:4700:4700::1111(2606:4700:4700::1111) 56 data bytes
64 bytes from 2606:4700:4700::1111: icmp_seq=1 ttl=61 time=13.3 ms
64 bytes from 2606:4700:4700::1111: icmp_seq=2 ttl=61 time=5.88 ms
64 bytes from 2606:4700:4700::1111: icmp_seq=3 ttl=61 time=4.02 ms
64 bytes from 2606:4700:4700::1111: icmp_seq=4 ttl=61 time=5.79 ms
64 bytes from 2606:4700:4700::1111: icmp_seq=5 ttl=61 time=5.18 ms
64 bytes from 2606:4700:4700::1111: icmp_seq=6 ttl=61 time=8.63 ms
^C
--- 2606:4700:4700::1111 ping statistics ---
6 packets transmitted, 6 received, 0% packet loss, time 5007ms
rtt min/avg/max/mdev = 4.029/7.141/13.320/3.091 ms
<span style="color:#8cd846;font-weight:bold">user@ubuntu18-desktop</span><span style="font-weight:bold">:</span><span style="color:#729fcf;font-weight:bold">~</span>$ </div>
<div class="a" style="left:498px;top:733px;width:11px;height:21px;background:#f8f6f7"></div>
<svg style="left:92px;top:156px" width="16" height="24" viewBox="0 0 16 24">
<path d="M1.5 1 V19 L5.5 15 L8.5 22 L11 21 L8 14 H13.5 Z" fill="#fff" stroke="#111" stroke-width="1.2" stroke-linejoin="round"/></svg>
<div class="a" style="left:1200px;top:0;width:3px;height:897px;background:#1e1e1e"></div>
<div class="a" style="left:0;top:893.5px;width:1203px;height:4px;background:#333230"></div>
<div class="a" style="left:0;top:894px;width:145px;height:3px;background:#545454"></div>
<div class="a" style="left:145px;top:894px;width:227px;height:3px;background:#2e2420"></div>
<div class="a" style="left:372px;top:894px;width:73px;height:3px;background:#707070"></div>
</body></html>
